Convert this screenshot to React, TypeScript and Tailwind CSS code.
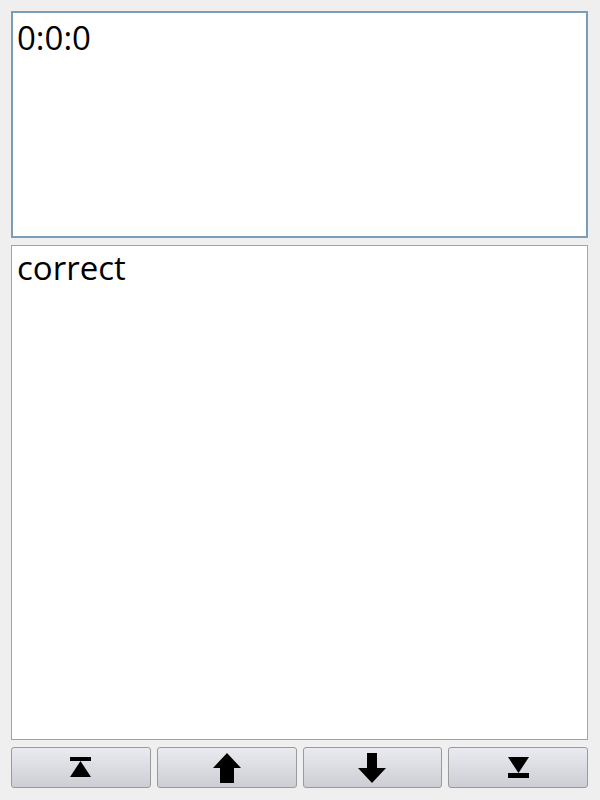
import React from "react";

const IconTop = () => (
  <svg width="21" height="21" viewBox="0 0 21 21">
    <rect x="0" y="0" width="21" height="4" fill="black" />
    <polygon points="10.5,4 0,20 21,20" fill="black" />
  </svg>
);

const IconUp = () => (
  <svg width="28" height="30" viewBox="0 0 28 30">
    <polygon points="14,0 28,15 21,15 21,30 7,30 7,15 0,15" fill="black" />
  </svg>
);

const IconDown = () => (
  <svg width="28" height="30" viewBox="0 0 28 30">
    <polygon points="9,0 19,0 19,15 28,15 14,30 0,15 9,15" fill="black" />
  </svg>
);

const IconBottom = () => (
  <svg width="21" height="21" viewBox="0 0 21 21">
    <polygon points="0,0 21,0 10.5,16" fill="black" />
    <rect x="0" y="16" width="21" height="5" fill="black" />
  </svg>
);

const NavButton = ({ children }: { children: React.ReactNode }) => (
  <button className="flex-1 h-[41px] flex items-center justify-center rounded-[3px] border border-[#9a9a9a] bg-gradient-to-b from-[#eaeaf1] to-[#cdcdd4]">
    {children}
  </button>
);

const App = () => {
  return (
    <div
      className="w-[600px] h-[800px] bg-[#efefef] flex flex-col pt-[11px] pl-[11px] pr-[12px] pb-[12px]"
      style={{ fontFamily: '"Open Sans", "Noto Sans", sans-serif' }}
    >
      <div className="h-[227px] bg-white border-2 border-[#7c9db8] px-[4px] pt-[2px] text-[33px] leading-[45px] text-black">
        0:0:0
      </div>
      <div className="flex-1 mt-[7px] bg-white border border-[#a3a3a3] px-[5px] text-[33px] leading-[36px] pt-[4px] text-black">
        correct
      </div>
      <div className="mt-[7px] flex gap-[6px]">
        <NavButton>
          <IconTop />
        </NavButton>
        <NavButton>
          <IconUp />
        </NavButton>
        <NavButton>
          <IconDown />
        </NavButton>
        <NavButton>
          <IconBottom />
        </NavButton>
      </div>
    </div>
  );
};

export default App;
